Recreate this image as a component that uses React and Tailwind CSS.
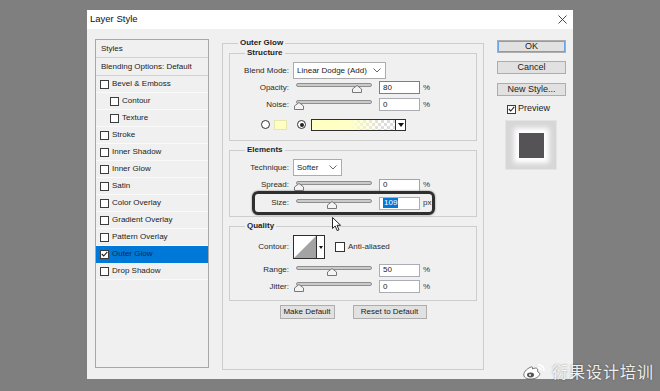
import React from 'react';

const styleRows = [
    { label: 'Bevel & Emboss' },
    { label: 'Contour', sub: true },
    { label: 'Texture', sub: true },
    { label: 'Stroke' },
    { label: 'Inner Shadow' },
    { label: 'Inner Glow' },
    { label: 'Satin' },
    { label: 'Color Overlay' },
    { label: 'Gradient Overlay' },
    { label: 'Pattern Overlay' },
    { label: 'Outer Glow', checked: true, active: true },
    { label: 'Drop Shadow' },
];

const Check = ({ checked }) => (
    <span className="w-[9px] h-[9px] shrink-0 border border-[#3c3c3c] bg-white flex items-center justify-center">
        {checked && (
            <svg width="7" height="6" viewBox="0 0 7 6">
                <path d="M0.8 3 L2.7 5 L6.3 0.8" fill="none" stroke="#222" strokeWidth="1.1" />
            </svg>
        )}
    </span>
);

const Chevron = () => (
    <svg width="8" height="5" viewBox="0 0 8 5">
        <path d="M0.5 0.5 L4 4 L7.5 0.5" fill="none" stroke="#666" />
    </svg>
);

const Thumb = () => (
    <svg width="10" height="8" viewBox="0 0 10 8">
        <path d="M5 0.5 L9.5 4 L9.5 7.5 L0.5 7.5 L0.5 4 Z" fill="#f4f4f4" stroke="#777" />
    </svg>
);

function Slider({ at }) {
    return (
        <div className="relative w-[76px] h-[10px] shrink-0">
            <div className="mt-[1px] h-[4px] rounded-full border border-[#8e8e8e] bg-[#cbcbcb]" />
            <div className="absolute top-[2px] leading-none" style={{ left: at - 5 }}>
                <Thumb />
            </div>
        </div>
    );
}

function Field({ value, tone = 'border-[#abadb3]', children }) {
    return (
        <div className={`w-[41px] h-[13px] shrink-0 border ${tone} bg-white flex items-center pl-[3px] text-[8px]`}>
            {children || value}
        </div>
    );
}

const Label = ({ children }) => (
    <span className="w-[59px] shrink-0 text-right text-[8px] text-[#2a2a2a]">{children}</span>
);

function SliderRow({ label, at, value, unit = '%', tone, rowClass, children }) {
    return (
        <div className={`flex items-center ${rowClass}`}>
            <Label>{label}</Label>
            <div className="ml-[7px]"><Slider at={at} /></div>
            <div className="ml-[7px]"><Field value={value} tone={tone}>{children}</Field></div>
            <span className="ml-[3px] text-[8px] text-[#333]">{unit}</span>
        </div>
    );
}

const Legend = ({ children }) => (
    <legend className="ml-[15px] px-[2px] text-[8px] font-bold leading-[10px] text-[#1e1e1e]">{children}</legend>
);

const Radio = ({ on }) => (
    <span className="w-[9px] h-[9px] shrink-0 rounded-full border border-[#333] bg-white flex items-center justify-center">
        {on && <span className="w-[4px] h-[4px] rounded-full bg-[#222]" />}
    </span>
);

const Button = ({ children, className = '' }) => (
    <div className={`h-[13px] border border-[#adadad] bg-[#e1e1e1] flex items-center justify-center ${className}`}>
        {children}
    </div>
);

const App = () => {
    return (
        <div className="w-[660px] h-[391px] bg-[#7f7f7f] relative overflow-hidden pt-[10px] pl-[87px] font-['Liberation_Sans',Arial,sans-serif] text-[#1b1b1b]">
            <div className="w-[486px] h-[369px] bg-[#f0f0f0] flex flex-col">
                {/* title bar */}
                <div className="h-[19px] bg-white flex items-center justify-between pl-[3px] pr-[6px]">
                    <span className="text-[9.5px] text-[#111]">Layer Style</span>
                    <svg width="9" height="9" viewBox="0 0 9 9">
                        <path d="M0.5 0.5 L8.5 8.5 M8.5 0.5 L0.5 8.5" stroke="#333" strokeWidth="0.9" />
                    </svg>
                </div>

                <div className="flex items-start pl-[8px]">
                    {/* styles list */}
                    <div className="mt-[10px] w-[114px] h-[329px] border border-[#a7a7a7] bg-[#f0f0f0] flex flex-col">
                        <div className="h-[18px] border-b border-[#d2d2d2] flex items-center pl-[5px] text-[8px]">Styles</div>
                        <div className="h-[18px] border-b border-[#d2d2d2] flex items-center pl-[5px] text-[8px]">Blending Options: Default</div>
                        {styleRows.map((r) => (
                            <div
                                key={r.label}
                                className={`h-[17px] border-b flex items-center gap-[3px] text-[8px] ${r.sub ? 'pl-[14px]' : 'pl-[4px]'} ${r.active ? 'bg-[#0078d7] border-[#0078d7] text-[#0b2a55]' : 'border-[#fafafa]'}`}
                            >
                                <Check checked={r.checked} />
                                <span>{r.label}</span>
                            </div>
                        ))}
                    </div>

                    {/* outer glow panel */}
                    <fieldset className="mt-[9px] ml-[13px] w-[262px] h-[332px] border border-[#cdcdcd]">
                        <Legend>Outer Glow</Legend>
                        <div className="px-[6px] flex flex-col">
                            <fieldset className="h-[93px] border border-[#cdcdcd]">
                                <Legend>Structure</Legend>
                                <div className="pt-[4px] flex flex-col">
                                    <div className="h-[17px] flex items-center">
                                        <Label>Blend Mode:</Label>
                                        <div className="ml-[4px] w-[93px] h-[17px] border border-[#acacac] bg-white flex items-center justify-between pl-[3px] pr-[4px] text-[8px]">
                                            <span>Linear Dodge (Add)</span>
                                            <Chevron />
                                        </div>
                                    </div>
                                    <SliderRow label="Opacity:" at={61} value="80" tone="border-[#3d8ee0]" rowClass="h-[17px]" />
                                    <SliderRow label="Noise:" at={3} value="0" rowClass="h-[17px]" />
                                    <div className="mt-[3px] h-[17px] flex items-center pl-[31px]">
                                        <Radio />
                                        <span className="ml-[4px] w-[13px] h-[10px] bg-[#ffffc0] border border-[#e6e6b0]" />
                                        <span className="ml-[10px]"><Radio on /></span>
                                        <div className="ml-[5px] w-[95px] h-[12px] border border-[#2e2e2e] flex">
                                            <div className="flex-1 bg-[conic-gradient(#dcdcdc_25%,#ffffff_0_50%,#dcdcdc_0_75%,#ffffff_0)] bg-[length:6px_6px]">
                                                <div className="h-full bg-[linear-gradient(to_right,#ffffc0_0%,#ffffc8_45%,rgba(255,255,255,0)_85%)]" />
                                            </div>
                                            <div className="w-[10px] border-l border-[#2e2e2e] bg-white flex items-center justify-center">
                                                <svg width="6" height="4" viewBox="0 0 6 4"><path d="M0 0 H6 L3 4 Z" fill="#111" /></svg>
                                            </div>
                                        </div>
                                    </div>
                                </div>
                            </fieldset>

                            <fieldset className="mt-[4px] h-[72px] border border-[#cdcdcd]">
                                <Legend>Elements</Legend>
                                <div className="pt-[4px] flex flex-col">
                                    <div className="h-[17px] flex items-center">
                                        <Label>Technique:</Label>
                                        <div className="ml-[4px] w-[49px] h-[17px] border border-[#acacac] bg-white flex items-center justify-between pl-[3px] pr-[4px] text-[8px]">
                                            <span>Softer</span>
                                            <Chevron />
                                        </div>
                                    </div>
                                    <SliderRow label="Spread:" at={3} value="0" tone="border-[#79aee6]" rowClass="h-[18px]" />
                                    <SliderRow label="Size:" at={36} unit="px" rowClass="h-[18px]">
                                        <span className="bg-[#0078d7] text-white px-[1px] leading-[10px]">109</span>
                                    </SliderRow>
                                </div>
                            </fieldset>

                            <fieldset className="mt-[4px] h-[80px] border border-[#cdcdcd]">
                                <Legend>Quality</Legend>
                                <div className="pt-[4px] flex flex-col">
                                    <div className="h-[24px] flex items-center">
                                        <Label>Contour:</Label>
                                        <div className="ml-[4px] w-[32px] h-[24px] border border-[#2e2e2e] bg-white flex">
                                            <svg width="22" height="22" viewBox="0 0 22 22" className="m-[0px]">
                                                <path d="M0 22 L22 0 L22 22 Z" fill="#a3a3a3" />
                                            </svg>
                                            <div className="flex-1 border-l border-[#2e2e2e] flex items-center justify-center">
                                                <svg width="4" height="3" viewBox="0 0 4 3"><path d="M0 0 H4 L2 3 Z" fill="#111" /></svg>
                                            </div>
                                        </div>
                                        <span className="ml-[10px] w-[10px] h-[10px] border border-[#333] bg-white" />
                                        <span className="ml-[3px] text-[8px] text-[#2a2a2a]">Anti-aliased</span>
                                    </div>
                                    <SliderRow label="Range:" at={36} value="50" rowClass="mt-[3px] h-[16px]" />
                                    <SliderRow label="Jitter:" at={3} value="0" rowClass="h-[17px]" />
                                </div>
                            </fieldset>

                            <div className="mt-[4px] flex justify-center gap-[18px] text-[8px]">
                                <Button className="w-[55px] h-[14px]">Make Default</Button>
                                <Button className="w-[74px] h-[14px]">Reset to Default</Button>
                            </div>
                        </div>
                    </fieldset>

                    {/* right column */}
                    <div className="mt-[11px] ml-[13px] w-[69px] flex flex-col text-[9px]">
                        <Button className="border-[#1979d4] shadow-[inset_0_0_0_1px_#66a6e6]">OK</Button>
                        <Button className="mt-[8px]">Cancel</Button>
                        <Button className="mt-[9px]">New Style...</Button>
                        <div className="mt-[8px] ml-[10px] h-[10px] flex items-center gap-[2px]">
                            <Check checked />
                            <span>Preview</span>
                        </div>
                        <div className="mt-[6px] ml-[8px] w-[52px] h-[50px] bg-[#d7d7d7] border border-[#e4e4e4] flex items-center justify-center">
                            <div className="w-[25px] h-[25px] bg-[#555355] shadow-[0_0_5px_5px_#ffffff]" />
                        </div>
                    </div>
                </div>
            </div>

            {/* annotation around Size row */}
            <div className="absolute left-[252px] top-[191px] w-[183px] h-[24px] border-[3px] border-[#2f2f2f] rounded-[6px] shadow-[0_0_2px_#777]" />

            {/* mouse cursor */}
            <svg className="absolute left-[332px] top-[217px]" width="10" height="15" viewBox="0 0 10 15">
                <path d="M0.5 0.5 L0.5 11.5 L3.2 9 L5.2 13.6 L7 12.8 L5 8.3 L8.6 8.3 Z" fill="#fff" stroke="#111" strokeWidth="0.9" />
            </svg>

            {/* watermark */}
            <div className="absolute left-[522px] top-[362px] flex items-center gap-[5px]">
                <svg width="25" height="17" viewBox="0 0 25 17">
                    <path d="M9 4 C4 6 1 10 2 13 C3 16 9 17 14 15 C18 13 19 10 16 9 C15 8.5 16 7 15.5 6 C14.5 4.5 12 5 10.5 6 C11 4.5 10.5 3.5 9 4 Z" fill="#fff" stroke="#555" strokeWidth="0.8" />
                    <ellipse cx="8.5" cy="12" rx="3.5" ry="2.4" fill="#555" />
                    <circle cx="8" cy="12" r="1" fill="#fff" />
                    <path d="M16 2 A5 5 0 0 1 21.8 7.8" stroke="#fff" strokeWidth="1.6" fill="none" />
                    <path d="M16 4.8 A2.5 2.5 0 0 1 19 7.4" stroke="#fff" strokeWidth="1.4" fill="none" />
                </svg>
                <span className="text-[16px] leading-[18px] tracking-[1px] text-white/90 font-['Noto_Sans_CJK_SC',sans-serif] [text-shadow:0_0_2px_rgba(0,0,0,0.5)]">衍果设计培训</span>
            </div>
        </div>
    );
};

export default App;
